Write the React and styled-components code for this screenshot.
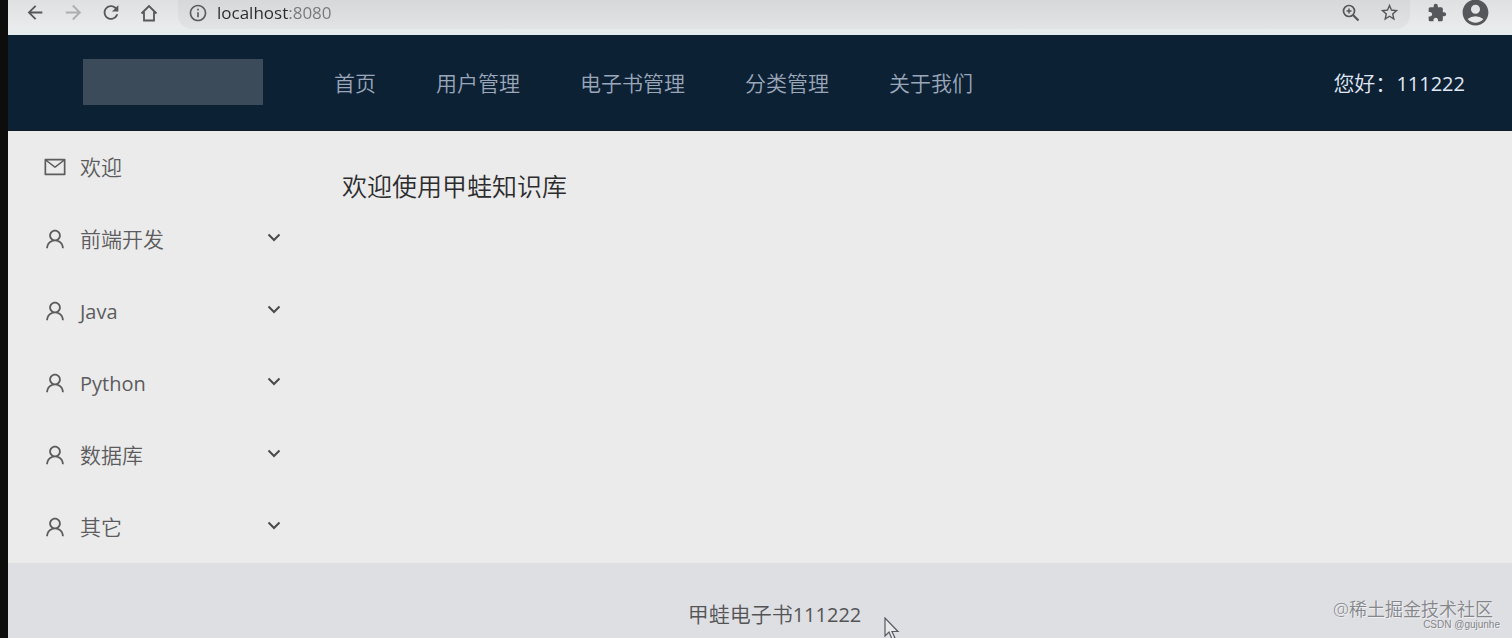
import React, { useState } from "react";
import styled, { createGlobalStyle } from "styled-components";
import { AiOutlineMail, AiOutlineUser } from "react-icons/ai";
import {
  MdAccountCircle,
  MdArrowBack,
  MdArrowForward,
  MdExtension,
  MdInfoOutline,
  MdRefresh,
  MdStarBorder,
} from "react-icons/md";

const GlobalStyle = createGlobalStyle`
  * {
    box-sizing: border-box;
  }
  body {
    margin: 0;
    font-family: "Open Sans", "Noto Sans CJK SC", sans-serif;
    font-size: 21px;
    font-weight: 350;
    line-height: 33px;
    color: #2c2c2e;
  }
  button, input {
    font: inherit;
    color: inherit;
    border: 0;
    padding: 0;
    background: none;
  }
  a {
    color: inherit;
    text-decoration: none;
  }
`;

const Frame = styled.div`
  position: relative;
  display: flex;
  flex-direction: column;
  min-height: 100vh;
  overflow: hidden;
  border-left: 8px solid #0d0d0c;
  background: #ebebeb;
`;

const Toolbar = styled.div`
  display: flex;
  align-items: flex-start;
  height: 35px;
  padding: 0 18px 0 16px;
  background: linear-gradient(#dfe0e1, #e9ebec 28px, #e3ecee);
`;

const ToolButton = styled.button`
  display: flex;
  align-items: center;
  justify-content: center;
  width: ${(p) => p.$width || 38}px;
  height: 25px;
  flex: none;
  color: ${(p) => (p.$muted ? "#adaeb0" : "#56575a")};
`;

const AddressBar = styled.div`
  display: flex;
  align-items: center;
  flex: 1;
  height: 29px;
  margin: 0 8px 0 2px;
  padding: 0 2px 4px 10px;
  border-radius: 0 0 14px 14px;
  background: linear-gradient(#d7d8da, #e1e3e4);
  color: #5b5c5f;
`;

const AddressInput = styled.input`
  flex: 1;
  height: 25px;
  min-width: 0;
  margin-left: 9px;
  outline: 0;
  font-size: 17px;
  font-weight: 400;
  line-height: 25px;
  background: linear-gradient(90deg, #2a2b2d 71px, #77787b 71px);
  background-clip: text;
  -webkit-background-clip: text;
  -webkit-text-fill-color: transparent;
`;

const Header = styled.header`
  display: flex;
  align-items: center;
  height: 96px;
  padding: 2px 47px 0 75px;
  background: #0d2135;
  border-bottom: 1px solid #141a24;
`;

const Logo = styled.div`
  width: 180px;
  height: 46px;
  margin-right: 41px;
  margin-bottom: 4px;
  background: #3c4b59;
`;

const Nav = styled.nav`
  display: flex;
  flex: 1;
  color: #9ba7b9;
`;

const NavLink = styled.a`
  padding: 0 30px;
`;

const Greeting = styled.a`
  color: #e0e8f5;
`;

const Latin = styled.span`
  font-size: 20px;
  font-weight: 400;
`;

const Body = styled.div`
  display: flex;
`;

const Sider = styled.aside`
  width: 300px;
  flex: none;
`;

const MenuItem = styled.button`
  display: flex;
  align-items: center;
  gap: 13px;
  width: 100%;
  height: 72px;
  padding: 0 27px 0 35px;
  text-align: left;
  color: #5c5c5e;
  cursor: pointer;

  svg {
    flex: none;
  }
`;

const MenuTitle = styled.span`
  flex: 1;
`;

const Arrow = styled.svg`
  width: 14px;
  height: 14px;
  margin-bottom: 4px;
  fill: none;
  stroke: #4a4a4c;
  stroke-width: 2;
`;

const Content = styled.main`
  flex: 1;
  padding: 36px 34px;
`;

const Title = styled.h1`
  margin: 0;
  font-size: 25px;
  font-weight: 350;
  line-height: 38px;
`;

const Footer = styled.footer`
  flex: 1;
  padding: 35px 0 0 29px;
  text-align: center;
  background: #dedfe2;
  color: #545457;
`;

const Watermark = styled.div`
  position: absolute;
  right: ${(p) => p.$right}px;
  bottom: ${(p) => p.$bottom}px;
  font-size: ${(p) => p.$size}px;
  line-height: ${(p) => p.$size + 6}px;
  color: #85868a;
  text-shadow: 1px 1px 0 #f0f0f2;
  font-family: ${(p) => p.$family || "inherit"};
`;

const Pointer = styled.svg`
  position: absolute;
  left: 876px;
  top: 617px;
`;

const navItems = ["首页", "用户管理", "电子书管理", "分类管理", "关于我们"];
const categories = [
  { name: "前端开发" },
  { name: "Java", latin: true },
  { name: "Python", latin: true },
  { name: "数据库" },
  { name: "其它" },
];

const HomeIcon = () => (
  <svg width="20" height="20" viewBox="0 0 20 20" fill="none" stroke="currentColor" strokeWidth="1.8">
    <path d="M2.500 10.500 10 3l7.500 7.500M5 9v8.500h10V9" />
  </svg>
);

const ZoomIcon = () => (
  <svg width="20" height="20" viewBox="0 0 20 20" fill="none" stroke="currentColor" strokeWidth="1.7">
    <circle cx="8" cy="8" r="5.500" />
    <path d="M12 12l5.500 5.500" strokeWidth="2.200" />
    <path d="M5.500 8h5M8 5.500v5" strokeWidth="1.500" />
  </svg>
);

const App = () => {
  const [url, setUrl] = useState("localhost:8080");

  return (
    <>
      <GlobalStyle />
      <Frame>
        <Toolbar>
          <ToolButton aria-label="后退" $width={22}><MdArrowBack size={23} /></ToolButton>
          <ToolButton aria-label="前进" $width={54} $muted><MdArrowForward size={23} /></ToolButton>
          <ToolButton aria-label="刷新" $width={22}><MdRefresh size={25} /></ToolButton>
          <ToolButton aria-label="主页" $width={54}><HomeIcon /></ToolButton>
          <AddressBar>
            <MdInfoOutline size={20} />
            <AddressInput aria-label="地址" value={url} onChange={(e) => setUrl(e.target.value)} />
            <ToolButton aria-label="缩放"><ZoomIcon /></ToolButton>
            <ToolButton aria-label="收藏"><MdStarBorder size={21} /></ToolButton>
          </AddressBar>
          <ToolButton aria-label="扩展程序"><MdExtension size={20} /></ToolButton>
          <ToolButton aria-label="个人资料"><MdAccountCircle size={31} /></ToolButton>
        </Toolbar>
        <Header>
          <Logo />
          <Nav>
            {navItems.map((item) => (
              <NavLink key={item} href="#">{item}</NavLink>
            ))}
          </Nav>
          <Greeting href="#">您好：<Latin>111222</Latin></Greeting>
        </Header>
        <Body>
          <Sider>
            <MenuItem>
              <AiOutlineMail size={24} />
              <MenuTitle>欢迎</MenuTitle>
            </MenuItem>
            {categories.map(({ name, latin }) => (
              <MenuItem key={name}>
                <AiOutlineUser size={24} />
                <MenuTitle>{latin ? <Latin>{name}</Latin> : name}</MenuTitle>
                <Arrow viewBox="0 0 14 14"><path d="M1.500 4.500 7 10l5.500-5.500" /></Arrow>
              </MenuItem>
            ))}
          </Sider>
          <Content>
            <Title>欢迎使用甲蛙知识库</Title>
          </Content>
        </Body>
        <Footer>甲蛙电子书<Latin>111222</Latin></Footer>
        <Watermark $right={19} $bottom={17} $size={18}>@稀土掘金技术社区</Watermark>
        <Watermark $right={12} $bottom={5} $size={10} $family={'"Liberation Sans", sans-serif'}>CSDN @gujunhe</Watermark>
        <Pointer width="16" height="21" viewBox="0 0 16 21">
          <path d="M1 1v18l4-4 3 7 3-1-3-6.500h6z" fill="#e9e9ec" stroke="#5a5862" strokeWidth="1.200" />
        </Pointer>
      </Frame>
    </>
  );
};

export default App;
